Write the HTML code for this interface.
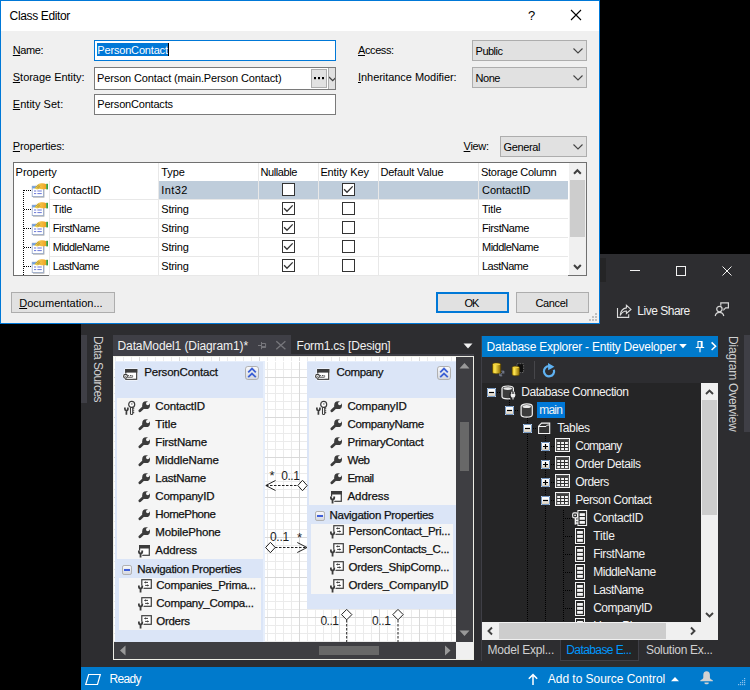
<!DOCTYPE html>
<html><head><meta charset="utf-8"><title>Class Editor</title><style>
html,body{margin:0;padding:0;width:750px;height:690px;overflow:hidden;background:#000;font-family:"Liberation Sans",sans-serif;font-size:12px;}
.a{position:absolute;display:block;box-sizing:content-box}
.t{position:absolute;white-space:pre;line-height:16px;height:16px}
.k{-webkit-text-stroke:0.25px currentColor}
.vt{writing-mode:vertical-rl;white-space:pre;line-height:14px}
u{text-decoration:underline;text-underline-offset:1px}
#canvas{background-color:#fff;overflow:hidden;
 background-image:linear-gradient(90deg,#d9d9d9 1px,transparent 1px),linear-gradient(#d9d9d9 1px,transparent 1px),linear-gradient(90deg,#ebebeb 1px,transparent 1px),linear-gradient(#ebebeb 1px,transparent 1px);
 background-size:40px 40px,40px 40px,8px 8px,8px 8px;background-position:25px 0,0 20px,1px 0,0 4px;}
.ent{background:#dbe5f7}
</style></head><body>
<svg width="0" height="0" style="position:absolute"><defs>
<linearGradient id="gbtn" x1="0" y1="0" x2="0" y2="1"><stop offset="0" stop-color="#fafbfd"/><stop offset="1" stop-color="#d3d6de"/></linearGradient>
<linearGradient id="gexp" x1="0" y1="0" x2="0" y2="1"><stop offset="0" stop-color="#ffffff"/><stop offset="0.4" stop-color="#fbfaf7"/><stop offset="1" stop-color="#d3c8b4"/></linearGradient>
<linearGradient id="gcyl" x1="0" y1="0" x2="1" y2="0"><stop offset="0" stop-color="#d8b010"/><stop offset="0.3" stop-color="#ffe652"/><stop offset="1" stop-color="#8a6800"/></linearGradient>
<linearGradient id="ghand" x1="0" y1="0" x2="1" y2="0"><stop offset="0" stop-color="#f7e36a"/><stop offset="1" stop-color="#f0a020"/></linearGradient>

<symbol id="liveshare"><g fill="none" stroke="#dcdcdc" stroke-width="1.1"><path d="M1.5 4V13.4H12.7V10.2"/><path d="M4.2 11.4C4.6 7.4 7 4.4 10.4 3.9V1.3L15 5.4L10.4 9.5V7C7.8 7 5.8 8.4 4.2 11.4Z"/></g></symbol>

<symbol id="feedback"><g fill="none" stroke="#d6d6d6" stroke-width="1.2"><path d="M6.8 4.8V1.8H14.4V6.9H11.6L10 8.6V7.4"/><circle cx="5.4" cy="8.1" r="2.7"/><path d="M1.2 15C1.8 12.4 3.4 11.4 5.4 11.4C7.4 11.4 9.2 12.4 9.8 15"/></g></symbol>

<symbol id="entico"><rect x="2.6" y="1.4" width="13.3" height="12.1" rx="0.8" fill="#fff"/><rect x="3.8" y="2.6" width="10.9" height="9.7" fill="#fff" stroke="#3c3c3c" stroke-width="1.2"/><rect x="3.2" y="2" width="12.1" height="3.6" fill="#3c3c3c"/><rect x="0.4" y="6.6" width="12" height="5" rx="2.4" fill="#fff"/><circle cx="3.5" cy="9.3" r="1.9" fill="#fff" stroke="#3c3c3c" stroke-width="1.1"/><circle cx="3.3" cy="9.3" r="0.55" fill="#3c3c3c"/><path d="M5.7 8.5H6.9M7.9 8.5H9.5M5.7 10.2H10.2L11.1 9.35L10.2 8.5" stroke="#3c3c3c" stroke-width="0.9" fill="none"/></symbol>

<symbol id="collapse"><rect x="0.5" y="0.5" width="13" height="13" rx="2.4" fill="url(#gbtn)" stroke="#b0b0b0"/><path d="M3.2 6.3L7 2.6L10.8 6.3M3.2 11.2L7 7.5L10.8 11.2" fill="none" stroke="#3c60d4" stroke-width="1.8"/></symbol>

<symbol id="minus"><rect x="0.5" y="0.5" width="9" height="9" rx="1.6" fill="url(#gbtn)" stroke="#b0b0b0"/><rect x="2" y="4" width="6" height="2" fill="#3f5fd9"/></symbol>

<symbol id="wrench"><path d="M1.9 10.8L6.4 6.6" stroke="#3c3c3c" stroke-width="2.8" stroke-linecap="round" fill="none"/><circle cx="8.1" cy="5.2" r="3.9" fill="#3c3c3c"/><circle cx="9.7" cy="3.5" r="1.7" fill="#f5f5f5"/><path d="M9.8 3.4L12.8 0.4" stroke="#f5f5f5" stroke-width="2.6"/></symbol>

<symbol id="keyfork"><g fill="none" stroke="#3c3c3c"><path d="M1.9 7.4V9A1.5 1.5 0 0 0 4.9 9V7.4M3.4 10.5V14.8" stroke-width="1.7"/><path d="M7.5 7.1V13.7Q7.5 14.5 8.6 14.5Q9.7 14.5 9.7 13.7V7.1" stroke-width="1.1" fill="#fff"/><circle cx="8.7" cy="4.4" r="3" stroke-width="1.2" fill="#fff"/><circle cx="8.8" cy="3.9" r="0.9" fill="#9a9a9a" stroke="none"/><path d="M10.1 8.8H11.2M10.1 10.7H11.2M10.1 12.6H11.2" stroke-width="1.1"/></g></symbol>

<symbol id="cplx"><rect x="2.6" y="1.6" width="9.7" height="9.7" fill="#fff" stroke="#3c3c3c" stroke-width="1.2"/><rect x="2" y="1" width="10.9" height="3.5" fill="#3c3c3c"/><path d="M1.9 6.4V7.8A1.65 1.65 0 0 0 5.2 7.8V6.4M3.55 9.45V13.6" fill="none" stroke="#f5f5f5" stroke-width="3.4"/><path d="M1.9 6.4V7.8A1.65 1.65 0 0 0 5.2 7.8V6.4M3.55 9.45V13.6" fill="none" stroke="#3c3c3c" stroke-width="1.8"/></symbol>

<symbol id="navico"><rect x="4.8" y="1.7" width="9.5" height="8.6" fill="#fff" stroke="#3c3c3c" stroke-width="1.2"/><path d="M8 4.4H11 M8.1 7.4H11.2" fill="none" stroke="#3c3c3c" stroke-width="1"/><path d="M6.9 4.4L8.8 3.3V5.5Z M12.2 7.4L10.3 6.3V8.5Z" fill="#3c3c3c"/><path d="M1.9 7.4V8.8A1.65 1.65 0 0 0 5.2 8.8V7.4M3.55 10.45V14.6" fill="none" stroke="#f5f5f5" stroke-width="3.4"/><path d="M1.9 7.4V8.8A1.65 1.65 0 0 0 5.2 8.8V7.4M3.55 10.45V14.6" fill="none" stroke="#3c3c3c" stroke-width="1.8"/></symbol>

<symbol id="expm"><rect x="0.5" y="0.5" width="8" height="8" fill="url(#gexp)" stroke="#7598c2"/><path d="M0 0h1v1h-1zM8 0h1v1h-1zM0 8h1v1h-1zM8 8h1v1h-1z" fill="#b9cde6"/><path d="M2 4.5H7" stroke="#000" stroke-width="1.2"/></symbol>
<symbol id="expp"><rect x="0.5" y="0.5" width="8" height="8" fill="url(#gexp)" stroke="#7598c2"/><path d="M0 0h1v1h-1zM8 0h1v1h-1zM0 8h1v1h-1zM8 8h1v1h-1z" fill="#b9cde6"/><path d="M2 4.5H7M4.5 2V7" stroke="#000" stroke-width="1.2"/></symbol>

<symbol id="dbcyl"><path d="M1.1 3.6C1.1 0 12.3 0 12.3 3.6V11.4C12.3 15 1.1 15 1.1 11.4Z" fill="#3c3c3c" stroke="#f1f1f1" stroke-width="1.2"/><ellipse cx="6.7" cy="3.6" rx="4.2" ry="1.5" fill="#e8e8e8"/></symbol>
<symbol id="dbconn"><path d="M1 3.4C1 0.2 12.4 0.2 12.4 3.4V11.6C12.4 14.6 1 14.6 1 11.6Z" fill="#3c3c3c" stroke="#f1f1f1" stroke-width="1.2"/><ellipse cx="6.7" cy="3.6" rx="4.3" ry="1.4" fill="#e8e8e8"/><circle cx="12" cy="10.4" r="3.9" fill="#252526"/><path d="M9.7 9H14.3V10.4A2.3 2.3 0 0 1 9.7 10.4Z" fill="#f1f1f1"/><path d="M10.8 9V6.8M13.2 9V6.8M12 12.6V14.6" fill="none" stroke="#f1f1f1" stroke-width="1.1"/></symbol>
<symbol id="folder"><path d="M0.6 11.5V4.2L3.6 1.1H11.7V11.5Z" fill="#333" stroke="#f4f4f4" stroke-width="1.1"/><path d="M0.8 4.5H8L9.4 3H11.4" fill="none" stroke="#f4f4f4" stroke-width="1"/></symbol>
<symbol id="table"><rect x="0.5" y="0.5" width="14" height="13" fill="#2f2f2f" stroke="#f4f4f4" stroke-width="1"/><rect x="1.75" y="1.75" width="11.5" height="10.5" fill="#303030" stroke="#7c7c7c" stroke-width="0.5"/><path d="M2 3H13" stroke="#6a6a6a" stroke-width="0.6"/><g fill="#f4f4f4"><rect x="2.2" y="4" width="2.9" height="2"/><rect x="6.1" y="4" width="2.9" height="2"/><rect x="10" y="4" width="2.9" height="2"/><rect x="2.2" y="7" width="2.9" height="2"/><rect x="6.1" y="7" width="2.9" height="2"/><rect x="10" y="7" width="2.9" height="2"/><rect x="2.2" y="10" width="2.9" height="2"/><rect x="6.1" y="10" width="2.9" height="2"/><rect x="10" y="10" width="2.9" height="2"/></g></symbol>
<symbol id="column"><rect x="0.5" y="0.5" width="9" height="15" fill="#2a2a2a" stroke="#f4f4f4" stroke-width="1"/><g fill="#f4f4f4"><rect x="2.1" y="3" width="5.8" height="2.8"/><rect x="2.1" y="7" width="5.8" height="2.8"/><rect x="2.1" y="11" width="5.8" height="2.8"/></g></symbol>
<symbol id="keycol"><rect x="5.9" y="0.5" width="8.7" height="15" fill="#2a2a2a" stroke="#f4f4f4" stroke-width="1"/><g fill="#f4f4f4"><rect x="7.6" y="3.2" width="5.3" height="2.8"/><rect x="7.6" y="7" width="5.3" height="2.8"/><rect x="7.6" y="11" width="5.3" height="2.8"/></g><path d="M2.2 7H5V15H2.2Z" fill="#252526"/><path d="M3.5 7.6V14.6" stroke="#f4f4f4" stroke-width="1.7" fill="none"/><path d="M3.5 10.4H6.2M3.5 13.2H6.2" stroke="#f4f4f4" stroke-width="1.2" fill="none"/><rect x="0.7" y="2.9" width="4.8" height="4.8" rx="1.3" fill="#252526" stroke="#f4f4f4" stroke-width="1.1"/><circle cx="3.1" cy="5.3" r="0.9" fill="#f4f4f4"/></symbol>

<symbol id="dbadd"><path d="M2.5 3.4C2.5 1.6 10.7 1.6 10.7 3.4V11.4C10.7 13.2 2.5 13.2 2.5 11.4Z" fill="url(#gcyl)" stroke="#5a4600" stroke-width="0.7"/><ellipse cx="6.6" cy="3.3" rx="3.7" ry="0.9" fill="#f2d23e"/><path d="M11.4 10.2H13.8V12.6 M13.6 10.6L10.4 14.2 M9.8 12.4V14.8H12.2" fill="none" stroke="#7f879a" stroke-width="1"/></symbol>
<symbol id="dbcopy"><rect x="7" y="1.7" width="6.6" height="8.8" fill="#101010" stroke="#6a6a6a" stroke-width="0.9" stroke-dasharray="1.6 1"/><path d="M2.1 5.6C2.1 3.9 9.5 3.9 9.5 5.6V12.4C9.5 14.1 2.1 14.1 2.1 12.4Z" fill="url(#gcyl)" stroke="#5a4600" stroke-width="0.7"/><ellipse cx="5.8" cy="5.5" rx="3.3" ry="0.8" fill="#f2d23e"/></symbol>
<symbol id="refresh"><path d="M11.9 6.7A5.1 5.1 0 1 1 7.1 3.1" fill="none" stroke="#5fb2f2" stroke-width="2.2"/><path d="M6 0L12.4 3.7L6.2 7.2Z" fill="#5fb2f2"/></symbol>
<symbol id="bell"><path d="M6.6 0.3C4.4 0.3 3.3 2 3.3 4V6.6C3.3 8 1.6 8.7 0.3 9.4V10.3H12.9V9.4C11.6 8.7 9.9 8 9.9 6.6V4C9.9 2 8.8 0.3 6.6 0.3Z M4.5 11.4H8.7V12.3C8.7 13.7 4.5 13.7 4.5 12.3Z" fill="#d2d2d2"/></symbol>

<symbol id="propico"><rect x="2" y="5.2" width="11.4" height="10.4" fill="#a8a8a8"/><rect x="1.2" y="4.2" width="11.2" height="10.4" fill="#fff" stroke="#97a8c8" stroke-width="0.8"/><rect x="1.2" y="4.2" width="11.2" height="2.2" fill="#6f9fdc"/><path d="M3 9H5.2M6.4 9H10.8M3 11.6H5.2M6.4 11.6H10.8" stroke="#6a78d8" stroke-width="1"/><path d="M3.4 6.4L7.2 2.2C9 1 13 0.8 15.4 2.2V7C13 7.4 10 7.6 8.6 6.8L6.4 7.6Z" fill="url(#ghand)"/><path d="M4 6.2L7.4 2.4M5.2 6.6L8.4 3M6.6 6.6L9.2 3.6M5 3.8L8 6.8M6.2 2.8L9.4 6" stroke="#a88c28" stroke-width="0.5"/><rect x="15.2" y="1.8" width="1.8" height="5.6" fill="#3ca03c"/></symbol>
<symbol id="cb0"><rect x="0.5" y="0.5" width="12" height="12" fill="#fff" stroke="#333"/></symbol>
<symbol id="cb1"><rect x="0.5" y="0.5" width="12" height="12" fill="#fff" stroke="#333"/><path d="M2.1 6.3L5 9.3L10.7 3.4" fill="none" stroke="#333" stroke-width="1.3"/></symbol>
</defs></svg>

<div class="a" style="left:81px;top:254px;width:669px;height:436px;background:#2d2d30;"></div>
<div class="a" style="left:600px;top:258px;width:6px;height:24px;background:#252526;"></div>
<svg class="a" style="left:620px;top:258px" width="130" height="26" viewBox="0 0 130 26" fill="none" stroke="#f1f1f1" stroke-width="1"><path d="M10 12.5H20"/><rect x="56.5" y="8.5" width="9" height="9"/><path d="M102.5 8.5L111.5 17.5M111.5 8.5L102.5 17.5"/></svg>
<svg class="a" style="left:616px;top:304px;" width="16" height="16"><use href="#liveshare"/></svg>
<div class="t " style="left:637.30px;top:302.84px;font-size:12px;color:#f1f1f1;letter-spacing:-0.487px;">Live Share</div>
<svg class="a" style="left:714px;top:301px;" width="17" height="16"><use href="#feedback"/></svg>
<div class="a" style="left:81px;top:335px;width:6px;height:68px;background:#3f3f46;"></div>
<div class="a vt" style="left:91px;top:336px;width:14px;height:70px;"><span style="font-size:12px;color:#d0d0d0;letter-spacing:-0.559px">Data Sources</span></div>
<div class="a" style="left:113px;top:335px;width:178px;height:21px;background:#3f3f46;"></div>
<div class="a" style="left:113px;top:354px;width:361px;height:2px;background:#3f3f46;"></div>
<div class="t " style="left:117.50px;top:338.14px;font-size:12px;color:#f1f1f1;letter-spacing:-0.101px;">DataModel1 (Diagram1)*</div>
<svg class="a" style="left:257px;top:340px" width="32" height="12" viewBox="0 0 32 12" fill="none" stroke="#77777c" stroke-width="1"><path d="M1 5.5H4.5 M4.5 2V9.2 M4.5 3.5H8.6V7.4H4.5" /><path d="M4.5 6.9H8.6" stroke-width="1.7"/><path d="M19.3 1.3L28.4 9.3M28.4 1.3L19.3 9.3" stroke-width="1.3"/></svg>
<div class="t " style="left:296.50px;top:338.14px;font-size:12px;color:#f1f1f1;letter-spacing:-0.198px;">Form1.cs [Design]</div>
<svg class="a" style="left:463px;top:343px" width="10" height="6"><path d="M0.5 0.5H9.5L5 5.5Z" fill="#f1f1f1"/></svg>
<div class="a" style="left:113px;top:356px;width:361px;height:304px;background:#eeeee6;"></div>
<div class="a" id="canvas" style="left:114px;top:357px;width:342px;height:285px;">
<div class="a" style="left:0;top:4px;width:342px;height:1px;background:#fff"></div>
<div class="a ent" style="left:1.2999999999999972px;top:4px;width:150.2px;height:290px;">
<div class="a" style="left:147.79999999999998px;top:0;width:2.4px;height:290px;background:#e6eefb"></div><div class="a" style="left:0;top:0;width:150.2px;height:1px;background:#e6eefb"></div>
<div class="a" style="left:2px;top:37px;width:146.2px;height:161px;background:#f5f5f5"></div>
<div class="a" style="left:3.7px;top:217px;width:142.2px;height:51.5px;background:#f5f5f5"></div>
</div>
<svg class="a" style="left:7.8px;top:10px;" width="17" height="15"><use href="#entico"/></svg>
<div class="t k" style="left:30.30px;top:7.42px;font-size:11.5px;color:#111;letter-spacing:-0.198px;">PersonContact</div>
<svg class="a" style="left:131.0px;top:9px;" width="14" height="14"><use href="#collapse"/></svg>
<svg class="a" style="left:9px;top:43px;" width="13" height="16"><use href="#keyfork"/></svg>
<svg class="a" style="left:24px;top:43px;" width="14" height="14"><use href="#wrench"/></svg>
<div class="t k" style="left:41.30px;top:41.02px;font-size:11.5px;color:#111;letter-spacing:-0.170px;">ContactID</div>
<svg class="a" style="left:24px;top:61px;" width="14" height="14"><use href="#wrench"/></svg>
<div class="t k" style="left:41.30px;top:59.02px;font-size:11.5px;color:#111;letter-spacing:0.040px;">Title</div>
<svg class="a" style="left:24px;top:79px;" width="14" height="14"><use href="#wrench"/></svg>
<div class="t k" style="left:41.30px;top:77.02px;font-size:11.5px;color:#111;letter-spacing:-0.148px;">FirstName</div>
<svg class="a" style="left:24px;top:97px;" width="14" height="14"><use href="#wrench"/></svg>
<div class="t k" style="left:41.30px;top:95.02px;font-size:11.5px;color:#111;letter-spacing:-0.105px;">MiddleName</div>
<svg class="a" style="left:24px;top:115px;" width="14" height="14"><use href="#wrench"/></svg>
<div class="t k" style="left:41.30px;top:113.02px;font-size:11.5px;color:#111;letter-spacing:-0.214px;">LastName</div>
<svg class="a" style="left:24px;top:133px;" width="14" height="14"><use href="#wrench"/></svg>
<div class="t k" style="left:41.30px;top:131.02px;font-size:11.5px;color:#111;letter-spacing:-0.191px;">CompanyID</div>
<svg class="a" style="left:24px;top:151px;" width="14" height="14"><use href="#wrench"/></svg>
<div class="t k" style="left:41.30px;top:149.02px;font-size:11.5px;color:#111;letter-spacing:-0.403px;">HomePhone</div>
<svg class="a" style="left:24px;top:169px;" width="14" height="14"><use href="#wrench"/></svg>
<div class="t k" style="left:41.30px;top:167.02px;font-size:11.5px;color:#111;letter-spacing:-0.166px;">MobilePhone</div>
<svg class="a" style="left:23px;top:187px;" width="15" height="15"><use href="#cplx"/></svg>
<div class="t k" style="left:41.30px;top:185.02px;font-size:11.5px;color:#111;letter-spacing:-0.070px;">Address</div>
<svg class="a" style="left:8.299999999999997px;top:208px;" width="10" height="10"><use href="#minus"/></svg>
<div class="t k" style="left:23.30px;top:203.72px;font-size:11.5px;color:#111;letter-spacing:-0.283px;">Navigation Properties</div>
<svg class="a" style="left:23px;top:221px;" width="16" height="16"><use href="#navico"/></svg>
<div class="t k" style="left:42.30px;top:220.22px;font-size:11.5px;color:#111;letter-spacing:-0.271px;">Companies_Prima...</div>
<svg class="a" style="left:23px;top:239px;" width="16" height="16"><use href="#navico"/></svg>
<div class="t k" style="left:42.30px;top:238.22px;font-size:11.5px;color:#111;letter-spacing:-0.311px;">Company_Compa...</div>
<svg class="a" style="left:23px;top:257px;" width="16" height="16"><use href="#navico"/></svg>
<div class="t k" style="left:42.30px;top:256.22px;font-size:11.5px;color:#111;letter-spacing:-0.308px;">Orders</div>
<div class="a ent" style="left:193.0px;top:4px;width:160px;height:248px;">
<div class="a" style="left:157.6px;top:0;width:2.4px;height:248px;background:#e6eefb"></div><div class="a" style="left:0;top:0;width:160px;height:1px;background:#e6eefb"></div>
<div class="a" style="left:2px;top:37px;width:150.5px;height:107px;background:#f5f5f5"></div>
<div class="a" style="left:3.7px;top:163px;width:142.2px;height:69.5px;background:#f5f5f5"></div>
</div>
<svg class="a" style="left:199.8px;top:10px;" width="17" height="15"><use href="#entico"/></svg>
<div class="t k" style="left:222.50px;top:7.42px;font-size:11.5px;color:#111;letter-spacing:-0.360px;">Company</div>
<svg class="a" style="left:323.0px;top:9px;" width="14" height="14"><use href="#collapse"/></svg>
<svg class="a" style="left:201px;top:43px;" width="13" height="16"><use href="#keyfork"/></svg>
<svg class="a" style="left:216px;top:43px;" width="14" height="14"><use href="#wrench"/></svg>
<div class="t k" style="left:233.50px;top:41.02px;font-size:11.5px;color:#111;letter-spacing:-0.191px;">CompanyID</div>
<svg class="a" style="left:216px;top:61px;" width="14" height="14"><use href="#wrench"/></svg>
<div class="t k" style="left:233.50px;top:59.02px;font-size:11.5px;color:#111;letter-spacing:-0.327px;">CompanyName</div>
<svg class="a" style="left:216px;top:79px;" width="14" height="14"><use href="#wrench"/></svg>
<div class="t k" style="left:233.50px;top:77.02px;font-size:11.5px;color:#111;letter-spacing:-0.239px;">PrimaryContact</div>
<svg class="a" style="left:216px;top:97px;" width="14" height="14"><use href="#wrench"/></svg>
<div class="t k" style="left:233.50px;top:95.02px;font-size:11.5px;color:#111;letter-spacing:-0.479px;">Web</div>
<svg class="a" style="left:216px;top:115px;" width="14" height="14"><use href="#wrench"/></svg>
<div class="t k" style="left:233.50px;top:113.02px;font-size:11.5px;color:#111;letter-spacing:-0.551px;">Email</div>
<svg class="a" style="left:215px;top:133px;" width="15" height="15"><use href="#cplx"/></svg>
<div class="t k" style="left:233.50px;top:131.02px;font-size:11.5px;color:#111;letter-spacing:-0.070px;">Address</div>
<svg class="a" style="left:200.5px;top:154px;" width="10" height="10"><use href="#minus"/></svg>
<div class="t k" style="left:215.50px;top:149.72px;font-size:11.5px;color:#111;letter-spacing:-0.283px;">Navigation Properties</div>
<svg class="a" style="left:215px;top:167px;" width="16" height="16"><use href="#navico"/></svg>
<div class="t k" style="left:234.50px;top:166.22px;font-size:11.5px;color:#111;letter-spacing:-0.220px;">PersonContact_Pri...</div>
<svg class="a" style="left:215px;top:185px;" width="16" height="16"><use href="#navico"/></svg>
<div class="t k" style="left:234.50px;top:184.22px;font-size:11.5px;color:#111;letter-spacing:-0.284px;">PersonContacts_C...</div>
<svg class="a" style="left:215px;top:203px;" width="16" height="16"><use href="#navico"/></svg>
<div class="t k" style="left:234.50px;top:202.22px;font-size:11.5px;color:#111;letter-spacing:-0.229px;">Orders_ShipComp...</div>
<svg class="a" style="left:215px;top:221px;" width="16" height="16"><use href="#navico"/></svg>
<div class="t k" style="left:234.50px;top:220.22px;font-size:11.5px;color:#111;letter-spacing:-0.141px;">Orders_CompanyID</div>
<svg class="a" style="left:0;top:0" width="342" height="285" viewBox="114 357 342 285" fill="none" stroke="#222" stroke-width="1"><path d="M266 485.5H298" stroke-dasharray="2.5 1.5"/><path d="M275.5 480.5L265.8 485.5L275.5 490.5"/><path d="M297.8 485.5L302.5 480.3L307.2 485.5L302.5 490.7Z" fill="#fff"/><path d="M275 547.5H306" stroke-dasharray="2.5 1.5"/><path d="M297.3 542.5L307 547.5L297.3 552.5"/><path d="M265.6 547.5L270.4 542.3L275.2 547.5L270.4 552.7Z" fill="#fff"/><path d="M346.7 620V642M398 620V642" stroke-dasharray="2.5 1.5"/><path d="M341.5 614.6L346.7 609.4L351.9 614.6L346.7 619.8Z" fill="#fff"/><path d="M392.8 614.6L398 609.4L403.2 614.6L398 619.8Z" fill="#fff"/></svg>
<div class="t " style="left:155.60px;top:111.30px;font-size:13px;color:#1e1e1e;">*</div>
<div class="t " style="left:167.30px;top:110.54px;font-size:12px;color:#1e1e1e;letter-spacing:-0.504px;">0..1</div>
<div class="t " style="left:156.00px;top:172.24px;font-size:12px;color:#1e1e1e;letter-spacing:-0.304px;">0..1</div>
<div class="t " style="left:183.10px;top:173.10px;font-size:13px;color:#1e1e1e;">*</div>
<div class="t " style="left:206.40px;top:256.14px;font-size:12px;color:#1e1e1e;letter-spacing:-0.504px;">0..1</div>
<div class="t " style="left:258.00px;top:256.14px;font-size:12px;color:#1e1e1e;letter-spacing:-0.329px;">0..1</div>
</div>
<div class="a" style="left:456px;top:357px;width:17px;height:285px;background:#3e3e42;"></div>
<div class="a" style="left:114px;top:642px;width:342px;height:17px;background:#3e3e42;"></div>
<div class="a" style="left:456px;top:642px;width:17px;height:17px;background:#f0f0f0;"></div>
<div class="a" style="left:460px;top:422px;width:9px;height:49px;background:#686868;"></div>
<div class="a" style="left:319px;top:646px;width:60px;height:9px;background:#686868;"></div>
<svg class="a" style="left:456px;top:357px" width="17" height="285"><path d="M3.5 11.5H13.5L8.5 6Z M3.5 273.5H13.5L8.5 279Z" fill="#999"/></svg>
<svg class="a" style="left:114px;top:642px" width="342" height="17"><path d="M11.5 3.5V13.5L6 8.5Z M331 3.5V13.5L336.5 8.5Z" fill="#999"/></svg>
<div class="a" style="left:481px;top:336px;width:1px;height:325px;background:#3f3f46;"></div>
<div class="a" style="left:482px;top:336px;width:236px;height:21px;background:#007acc;"></div>
<div class="t " style="left:486.60px;top:339.44px;font-size:12px;color:#fff;letter-spacing:-0.236px;">Database Explorer - Entity Developer</div>
<svg class="a" style="left:678px;top:338px" width="40" height="18" viewBox="0 0 40 18"><path d="M1.2 6H8.8L5 10.2Z" fill="#fff"/><path d="M20 3.5V9.5M19.5 3.5H24.5M24 3.5V9.5M17.8 9.5H26.2M22 9.5V14.2" stroke="#fff" fill="none" stroke-width="1.1"/><path d="M23.5 3.5V9.5" stroke="#fff" stroke-width="1.6"/><path d="M33.6 4.4L37.6 8.2L33.6 12" stroke="#fff" fill="none" stroke-width="1.5"/></svg>
<div class="a" style="left:482px;top:357px;width:236px;height:26px;background:#2d2d30;"></div>
<svg class="a" style="left:490px;top:361px;" width="17" height="18"><use href="#dbadd"/></svg>
<svg class="a" style="left:510px;top:362px;" width="15" height="16"><use href="#dbcopy"/></svg>
<div class="a" style="left:534px;top:361px;width:1px;height:18px;background:#46464a;"></div>
<svg class="a" style="left:542px;top:363px;" width="14" height="15"><use href="#refresh"/></svg>
<div class="a" id="tree" style="left:482px;top:383px;width:219px;height:239px;background:#252526;overflow:hidden">
<svg class="a" style="left:0;top:0" width="219" height="239" viewBox="482 383 219 239" stroke="#000" stroke-width="1" stroke-dasharray="1 1" fill="none" shape-rendering="crispEdges"><path d="M497 392.5H501 M509.5 400V406 M515 410.5H519 M527.5 418V424 M533 428.5H537 M527.5 434V622 M545.5 436V442 M545.5 452V460 M545.5 470V478 M545.5 488V496 M545.5 506V622 M551 446.5H555 M551 464.5H555 M551 482.5H555 M551 500.5H555 M563.5 510V622 M565 518.5H572 M565 536.5H572 M565 554.5H572 M565 572.5H572 M565 590.5H572 M565 608.5H572"/></svg>
<svg class="a" style="left:5px;top:5px;" width="9" height="9"><use href="#expm"/></svg>
<svg class="a" style="left:18.5px;top:1.5px;" width="16" height="15"><use href="#dbconn"/></svg>
<div class="t " style="left:39.20px;top:0.84px;font-size:12px;color:#f1f1f1;letter-spacing:-0.422px;">Database Connection</div>
<svg class="a" style="left:23px;top:23px;" width="9" height="9"><use href="#expm"/></svg>
<svg class="a" style="left:37.5px;top:19.5px;" width="14" height="15"><use href="#dbcyl"/></svg>
<div class="a" style="left:54.700000000000045px;top:19px;width:28.5px;height:16px;background:#0078d7;"></div>
<div class="t " style="left:57.20px;top:18.84px;font-size:12px;color:#f1f1f1;letter-spacing:-0.752px;">main</div>
<svg class="a" style="left:41px;top:41px;" width="9" height="9"><use href="#expm"/></svg>
<svg class="a" style="left:56px;top:39px;" width="13" height="13"><use href="#folder"/></svg>
<div class="t " style="left:75.20px;top:36.84px;font-size:12px;color:#f1f1f1;letter-spacing:-0.381px;">Tables</div>
<svg class="a" style="left:59px;top:59px;" width="9" height="9"><use href="#expp"/></svg>
<svg class="a" style="left:73px;top:55px;" width="15" height="14"><use href="#table"/></svg>
<div class="t " style="left:93.20px;top:54.84px;font-size:12px;color:#f1f1f1;letter-spacing:-0.722px;">Company</div>
<svg class="a" style="left:59px;top:77px;" width="9" height="9"><use href="#expp"/></svg>
<svg class="a" style="left:73px;top:73px;" width="15" height="14"><use href="#table"/></svg>
<div class="t " style="left:93.20px;top:72.84px;font-size:12px;color:#f1f1f1;letter-spacing:-0.407px;">Order Details</div>
<svg class="a" style="left:59px;top:95px;" width="9" height="9"><use href="#expp"/></svg>
<svg class="a" style="left:73px;top:91px;" width="15" height="14"><use href="#table"/></svg>
<div class="t " style="left:93.20px;top:90.84px;font-size:12px;color:#f1f1f1;letter-spacing:-0.529px;">Orders</div>
<svg class="a" style="left:59px;top:113px;" width="9" height="9"><use href="#expm"/></svg>
<svg class="a" style="left:73px;top:109px;" width="15" height="14"><use href="#table"/></svg>
<div class="t " style="left:93.20px;top:108.84px;font-size:12px;color:#f1f1f1;letter-spacing:-0.472px;">Person Contact</div>
<svg class="a" style="left:90px;top:127px;" width="17" height="16"><use href="#keycol"/></svg>
<div class="t " style="left:111.20px;top:126.84px;font-size:12px;color:#f1f1f1;letter-spacing:-0.406px;">ContactID</div>
<svg class="a" style="left:93px;top:145px;" width="10" height="16"><use href="#column"/></svg>
<div class="t " style="left:111.20px;top:144.84px;font-size:12px;color:#f1f1f1;letter-spacing:-0.145px;">Title</div>
<svg class="a" style="left:93px;top:163px;" width="10" height="16"><use href="#column"/></svg>
<div class="t " style="left:111.20px;top:162.84px;font-size:12px;color:#f1f1f1;letter-spacing:-0.415px;">FirstName</div>
<svg class="a" style="left:93px;top:181px;" width="10" height="16"><use href="#column"/></svg>
<div class="t " style="left:111.20px;top:180.84px;font-size:12px;color:#f1f1f1;letter-spacing:-0.486px;">MiddleName</div>
<svg class="a" style="left:93px;top:199px;" width="10" height="16"><use href="#column"/></svg>
<div class="t " style="left:111.20px;top:198.84px;font-size:12px;color:#f1f1f1;letter-spacing:-0.549px;">LastName</div>
<svg class="a" style="left:93px;top:217px;" width="10" height="16"><use href="#column"/></svg>
<div class="t " style="left:111.20px;top:216.84px;font-size:12px;color:#f1f1f1;letter-spacing:-0.506px;">CompanyID</div>
<svg class="a" style="left:93px;top:235px;" width="10" height="16"><use href="#column"/></svg>
<div class="t " style="left:111.20px;top:234.84px;font-size:12px;color:#f1f1f1;letter-spacing:-0.712px;">HomePhone</div>
</div>
<div class="a" style="left:701px;top:383px;width:17px;height:239px;background:#f0f0f0;"></div>
<div class="a" style="left:702px;top:400px;width:15px;height:115px;background:#cdcdcd;"></div>
<svg class="a" style="left:701px;top:383px" width="17" height="239" fill="none" stroke="#404040" stroke-width="1.9"><path d="M5 11L8.5 7.5L12 11 M5 230L8.5 233.5L12 230"/></svg>
<div class="a" style="left:482px;top:622px;width:236px;height:18px;background:#f0f0f0;"></div>
<div class="a" style="left:499px;top:623px;width:167px;height:16px;background:#cdcdcd;"></div>
<svg class="a" style="left:482px;top:622px" width="236" height="18" fill="none" stroke="#404040" stroke-width="1.9"><path d="M10 5.5L6.5 9L10 12.5 M209 5.5L212.5 9L209 12.5"/></svg>
<div class="t " style="left:487.50px;top:641.84px;font-size:12px;color:#d0d0d0;letter-spacing:-0.220px;">Model Expl...</div>
<div class="a" style="left:560px;top:640px;width:79px;height:21px;background:#3f3f46;"></div>
<div class="a" style="left:561px;top:640px;width:77px;height:20px;background:#252526;"></div>
<div class="t " style="left:566.30px;top:641.84px;font-size:12px;color:#0097fb;letter-spacing:-0.593px;">Database E...</div>
<div class="t " style="left:646.00px;top:641.84px;font-size:12px;color:#d0d0d0;letter-spacing:-0.293px;">Solution Ex...</div>
<div class="a vt" style="left:726px;top:336px;width:14px;height:100px;"><span style="font-size:12px;color:#d0d0d0;letter-spacing:-0.199px">Diagram Overview</span></div>
<div class="a" style="left:744px;top:335px;width:6px;height:97px;background:#3f3f46;"></div>
<div class="a" style="left:81px;top:667px;width:669px;height:23px;background:#007acc;"></div>
<svg class="a" style="left:84px;top:672px" width="19" height="14"><path d="M4.7 2.5H16.3L13.5 12.5H1.7Z" fill="none" stroke="#fff" stroke-width="1.2"/></svg>
<div class="t " style="left:109.40px;top:670.84px;font-size:12px;color:#fff;letter-spacing:-0.658px;">Ready</div>
<svg class="a" style="left:527px;top:672px" width="12" height="14"><path d="M6 13V3 M1.8 6.8L6 2.6L10.2 6.8" fill="none" stroke="#fff" stroke-width="1.5"/></svg>
<div class="t " style="left:547.80px;top:671.24px;font-size:12px;color:#fff;letter-spacing:-0.032px;">Add to Source Control</div>
<svg class="a" style="left:670px;top:676px" width="10" height="6"><path d="M1 5.2H9L5 1Z" fill="#fff"/></svg>
<svg class="a" style="left:700px;top:671px;" width="14" height="15"><use href="#bell"/></svg>
<svg class="a" style="left:737px;top:677px" width="12" height="12" fill="#86c0ec"><rect x="7" y="1" width="1.2" height="1.2"/><rect x="5" y="3" width="1.2" height="1.2"/><rect x="7" y="3" width="1.2" height="1.2"/><rect x="3" y="5" width="1.2" height="1.2"/><rect x="5" y="5" width="1.2" height="1.2"/><rect x="7" y="5" width="1.2" height="1.2"/><rect x="1" y="7" width="1.2" height="1.2"/><rect x="3" y="7" width="1.2" height="1.2"/><rect x="5" y="7" width="1.2" height="1.2"/><rect x="7" y="7" width="1.2" height="1.2"/></svg>
<div class="a" id="dlg" style="left:0;top:0;width:600px;height:324px;background:#0078d7"><div class="a" style="left:1px;top:1px;width:598px;height:30px;background:#fff"></div><div class="a" style="left:1px;top:31px;width:598px;height:292px;background:#f0f0f0"></div></div>
<div class="t " style="left:9.60px;top:7.84px;font-size:12px;color:#000;letter-spacing:-0.357px;">Class Editor</div>
<div class="t " style="left:528.00px;top:7.80px;font-size:13px;color:#000;">?</div>
<svg class="a" style="left:570px;top:9px" width="12" height="12"><path d="M1 1L11 11M11 1L1 11" stroke="#000" stroke-width="1.1" fill="none"/></svg>
<div class="t" style="left:12.80px;top:42.19px;font-size:11px;color:#000;letter-spacing:-0.440px"><u>N</u>ame:</div>
<div class="t" style="left:12.80px;top:69.19px;font-size:11px;color:#000;letter-spacing:-0.030px"><u>S</u>torage Entity:</div>
<div class="t" style="left:12.80px;top:96.19px;font-size:11px;color:#000;letter-spacing:0.024px"><u>E</u>ntity Set:</div>
<div class="t" style="left:358.00px;top:42.19px;font-size:11px;color:#000;letter-spacing:-0.402px"><u>A</u>ccess:</div>
<div class="t" style="left:358.00px;top:69.19px;font-size:11px;color:#000;letter-spacing:-0.051px"><u>I</u>nheritance Modifier:</div>
<div class="t" style="left:12.80px;top:138.19px;font-size:11px;color:#000;letter-spacing:-0.135px"><u>P</u>roperties:</div>
<div class="t" style="left:463.60px;top:138.19px;font-size:11px;color:#000;letter-spacing:-0.340px"><u>V</u>iew:</div>
<div class="a" style="left:94px;top:40px;width:240px;height:19px;background:#fff;border:1px solid #0078d7"></div>
<div class="a" style="left:97px;top:43px;width:71.5px;height:13px;background:#0078d7;"></div>
<div class="t" style="left:97.30px;top:42.19px;font-size:11px;color:#fff;letter-spacing:-0.174px">PersonContact</div>
<div class="a" style="left:168px;top:43px;width:1px;height:13px;background:#000;"></div>
<div class="a" style="left:94px;top:67px;width:240px;height:21px;background:#fff;border:1px solid #7a7a7a"></div>
<div class="t" style="left:97.00px;top:70.19px;font-size:11px;color:#000;letter-spacing:-0.123px">Person Contact (main.Person Contact)</div>
<div class="a" style="left:311px;top:69px;width:14px;height:17px;background:#e1e1e1;border:1px solid #adadad"></div>
<svg class="a" style="left:311px;top:69px" width="16" height="19"><rect x="3" y="8" width="2" height="2.2"/><rect x="7" y="8" width="2" height="2.2"/><rect x="11" y="8" width="2" height="2.2"/></svg>
<div class="a" style="left:328px;top:68px;width:7px;height:21px;background:#e1e1e1;"></div>
<div class="a" style="left:328px;top:68px;width:1px;height:21px;background:#adadad;"></div>
<svg class="a" style="left:329px;top:68px" width="6" height="21"><path d="M0 9L3.7 12.6L7.2 9.2" fill="none" stroke="#444" stroke-width="1.3"/></svg>
<div class="a" style="left:94px;top:94px;width:240px;height:19px;background:#fff;border:1px solid #7a7a7a"></div>
<div class="t" style="left:97.30px;top:96.19px;font-size:11px;color:#000;letter-spacing:-0.197px">PersonContacts</div>
<div class="a" style="left:472px;top:40px;width:113px;height:19px;background:#e1e1e1;border:1px solid #adadad"></div>
<div class="t" style="left:475.60px;top:42.59px;font-size:11px;color:#000;letter-spacing:-0.527px">Public</div>
<svg class="a" style="left:572px;top:47px" width="12" height="8"><path d="M1.5 1.5L6 6L10.5 1.5" fill="none" stroke="#444" stroke-width="1.1"/></svg>
<div class="a" style="left:472px;top:67px;width:113px;height:19px;background:#e1e1e1;border:1px solid #adadad"></div>
<div class="t" style="left:475.60px;top:69.59px;font-size:11px;color:#000;letter-spacing:-0.474px">None</div>
<svg class="a" style="left:572px;top:74px" width="12" height="8"><path d="M1.5 1.5L6 6L10.5 1.5" fill="none" stroke="#444" stroke-width="1.1"/></svg>
<div class="a" style="left:500px;top:136px;width:85px;height:19px;background:#e1e1e1;border:1px solid #adadad"></div>
<div class="t" style="left:503.60px;top:138.59px;font-size:11px;color:#000;letter-spacing:-0.391px">General</div>
<svg class="a" style="left:572px;top:143px" width="12" height="8"><path d="M1.5 1.5L6 6L10.5 1.5" fill="none" stroke="#444" stroke-width="1.1"/></svg>
<div class="a" style="left:13px;top:162px;width:572px;height:112px;background:#fff;border:1px solid #707070"></div>
<div class="t" style="left:15.60px;top:163.79px;font-size:11px;color:#000;letter-spacing:-0.047px">Property</div>
<div class="t" style="left:161.30px;top:163.79px;font-size:11px;color:#000;letter-spacing:-0.089px">Type</div>
<div class="t" style="left:260.50px;top:163.79px;font-size:11px;color:#000;letter-spacing:-0.406px">Nullable</div>
<div class="t" style="left:320.40px;top:163.79px;font-size:11px;color:#000;letter-spacing:-0.112px">Entity Key</div>
<div class="t" style="left:380.40px;top:163.79px;font-size:11px;color:#000;letter-spacing:-0.171px">Default Value</div>
<div class="t" style="left:481.00px;top:163.79px;font-size:11px;color:#000;letter-spacing:-0.292px">Storage Column</div>
<div class="a" style="left:159px;top:181px;width:409px;height:18px;background:#bfcddb;"></div>
<div class="a" style="left:49px;top:199px;width:519px;height:1px;background:#e8e8e8;"></div>
<div class="a" style="left:49px;top:218px;width:519px;height:1px;background:#e8e8e8;"></div>
<div class="a" style="left:49px;top:237px;width:519px;height:1px;background:#e8e8e8;"></div>
<div class="a" style="left:49px;top:256px;width:519px;height:1px;background:#e8e8e8;"></div>
<div class="a" style="left:49px;top:275px;width:519px;height:1px;background:#e8e8e8;"></div>
<div class="a" style="left:49px;top:181px;width:1px;height:94px;background:#e8e8e8;"></div>
<div class="a" style="left:158px;top:163px;width:1px;height:112px;background:#e8e8e8;"></div>
<div class="a" style="left:258px;top:163px;width:1px;height:112px;background:#e8e8e8;"></div>
<div class="a" style="left:318px;top:163px;width:1px;height:112px;background:#e8e8e8;"></div>
<div class="a" style="left:378px;top:163px;width:1px;height:112px;background:#e8e8e8;"></div>
<div class="a" style="left:478px;top:163px;width:1px;height:112px;background:#e8e8e8;"></div>
<svg class="a" style="left:31px;top:182px;" width="18" height="16"><use href="#propico"/></svg>
<div class="t" style="left:52.80px;top:182.19px;font-size:11px;color:#000;letter-spacing:-0.057px">ContactID</div>
<div class="t" style="left:161.30px;top:182.19px;font-size:11px;color:#000;letter-spacing:0.387px">Int32</div>
<svg class="a" style="left:282px;top:183px;" width="13" height="13"><use href="#cb0"/></svg>
<svg class="a" style="left:342px;top:183px;" width="13" height="13"><use href="#cb1"/></svg>
<div class="t" style="left:482.00px;top:182.19px;font-size:11px;color:#000;letter-spacing:-0.057px">ContactID</div>
<svg class="a" style="left:31px;top:201px;" width="18" height="16"><use href="#propico"/></svg>
<div class="t" style="left:52.80px;top:201.19px;font-size:11px;color:#000;letter-spacing:-0.195px">Title</div>
<div class="t" style="left:161.30px;top:201.19px;font-size:11px;color:#000;letter-spacing:-0.256px">String</div>
<svg class="a" style="left:282px;top:202px;" width="13" height="13"><use href="#cb1"/></svg>
<svg class="a" style="left:342px;top:202px;" width="13" height="13"><use href="#cb0"/></svg>
<div class="t" style="left:482.00px;top:201.19px;font-size:11px;color:#000;letter-spacing:-0.195px">Title</div>
<svg class="a" style="left:31px;top:220px;" width="18" height="16"><use href="#propico"/></svg>
<div class="t" style="left:52.80px;top:220.19px;font-size:11px;color:#000;letter-spacing:-0.414px">FirstName</div>
<div class="t" style="left:161.30px;top:220.19px;font-size:11px;color:#000;letter-spacing:-0.256px">String</div>
<svg class="a" style="left:282px;top:221px;" width="13" height="13"><use href="#cb1"/></svg>
<svg class="a" style="left:342px;top:221px;" width="13" height="13"><use href="#cb0"/></svg>
<div class="t" style="left:482.00px;top:220.19px;font-size:11px;color:#000;letter-spacing:-0.414px">FirstName</div>
<svg class="a" style="left:31px;top:239px;" width="18" height="16"><use href="#propico"/></svg>
<div class="t" style="left:52.80px;top:239.19px;font-size:11px;color:#000;letter-spacing:-0.525px">MiddleName</div>
<div class="t" style="left:161.30px;top:239.19px;font-size:11px;color:#000;letter-spacing:-0.256px">String</div>
<svg class="a" style="left:282px;top:240px;" width="13" height="13"><use href="#cb1"/></svg>
<svg class="a" style="left:342px;top:240px;" width="13" height="13"><use href="#cb0"/></svg>
<div class="t" style="left:482.00px;top:239.19px;font-size:11px;color:#000;letter-spacing:-0.525px">MiddleName</div>
<svg class="a" style="left:31px;top:258px;" width="18" height="16"><use href="#propico"/></svg>
<div class="t" style="left:52.80px;top:258.19px;font-size:11px;color:#000;letter-spacing:-0.517px">LastName</div>
<div class="t" style="left:161.30px;top:258.19px;font-size:11px;color:#000;letter-spacing:-0.256px">String</div>
<svg class="a" style="left:282px;top:259px;" width="13" height="13"><use href="#cb1"/></svg>
<svg class="a" style="left:342px;top:259px;" width="13" height="13"><use href="#cb0"/></svg>
<div class="t" style="left:482.00px;top:258.19px;font-size:11px;color:#000;letter-spacing:-0.517px">LastName</div>
<svg class="a" style="left:14px;top:181px" width="20" height="94" stroke="#000" stroke-width="1" stroke-dasharray="1 1" fill="none"><path d="M9.5 9V94 M10 9.5H18 M10 28.5H18 M10 47.5H18 M10 66.5H18 M10 85.5H18"/></svg>
<div class="a" style="left:569px;top:163px;width:17px;height:112px;background:#f0f0f0;"></div>
<div class="a" style="left:570px;top:180px;width:15px;height:57px;background:#cdcdcd;"></div>
<svg class="a" style="left:569px;top:163px" width="17" height="112" fill="none" stroke="#404040" stroke-width="2"><path d="M5 10.8L8.4 7.3L11.8 10.8 M5 102L8.4 105.5L11.8 102"/></svg>
<div class="a" style="left:11px;top:292px;width:102px;height:19px;background:#e1e1e1;border:1px solid #adadad"></div>
<div class="t" style="left:19.20px;top:294.69px;font-size:11px;color:#000;letter-spacing:0.022px"><u>D</u>ocumentation...</div>
<div class="a" style="left:436px;top:292px;width:69px;height:17px;background:#e1e1e1;border:2px solid #0078d7"></div>
<div class="t" style="left:464.50px;top:294.69px;font-size:11px;color:#000;letter-spacing:-0.947px">OK</div>
<div class="a" style="left:516px;top:292px;width:71px;height:19px;background:#e1e1e1;border:1px solid #adadad"></div>
<div class="t" style="left:535.50px;top:294.69px;font-size:11px;color:#000;letter-spacing:-0.373px">Cancel</div>
<svg class="a" style="left:587px;top:311px" width="12" height="12" fill="#bfbfbf"><rect x="8" y="2" width="2" height="2"/><rect x="5" y="5" width="2" height="2"/><rect x="8" y="5" width="2" height="2"/><rect x="2" y="8" width="2" height="2"/><rect x="5" y="8" width="2" height="2"/><rect x="8" y="8" width="2" height="2"/></svg>
</body></html>
